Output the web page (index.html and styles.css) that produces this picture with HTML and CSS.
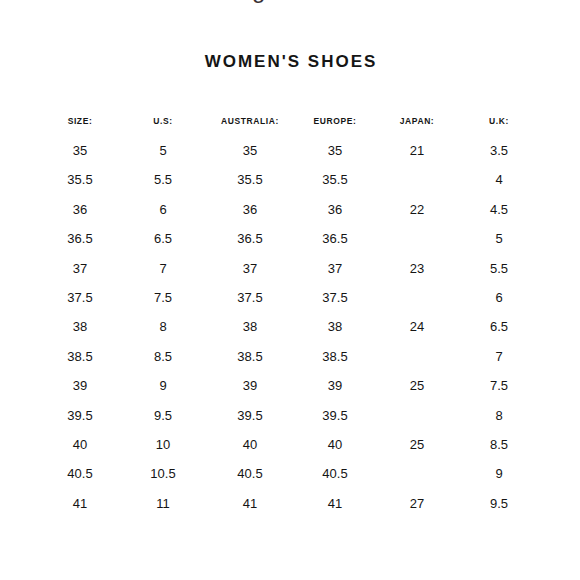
FILE: index.html
```html
<!DOCTYPE html>
<html>
<head>
<meta charset="utf-8">
<link rel="stylesheet" href="styles.css">
</head>
<body>
<div class="top-line">Sizing</div>
<h1 class="title">WOMEN'S SHOES</h1>
<div class="chart">
  <div class="hd">SIZE:</div><div class="hd">U.S:</div><div class="hd">AUSTRALIA:</div><div class="hd">EUROPE:</div><div class="hd">JAPAN:</div><div class="hd">U.K:</div>
  <div>35</div><div>5</div><div>35</div><div>35</div><div>21</div><div>3.5</div>
  <div>35.5</div><div>5.5</div><div>35.5</div><div>35.5</div><div></div><div>4</div>
  <div>36</div><div>6</div><div>36</div><div>36</div><div>22</div><div>4.5</div>
  <div>36.5</div><div>6.5</div><div>36.5</div><div>36.5</div><div></div><div>5</div>
  <div>37</div><div>7</div><div>37</div><div>37</div><div>23</div><div>5.5</div>
  <div>37.5</div><div>7.5</div><div>37.5</div><div>37.5</div><div></div><div>6</div>
  <div>38</div><div>8</div><div>38</div><div>38</div><div>24</div><div>6.5</div>
  <div>38.5</div><div>8.5</div><div>38.5</div><div>38.5</div><div></div><div>7</div>
  <div>39</div><div>9</div><div>39</div><div>39</div><div>25</div><div>7.5</div>
  <div>39.5</div><div>9.5</div><div>39.5</div><div>39.5</div><div></div><div>8</div>
  <div>40</div><div>10</div><div>40</div><div>40</div><div>25</div><div>8.5</div>
  <div>40.5</div><div>10.5</div><div>40.5</div><div>40.5</div><div></div><div>9</div>
  <div>41</div><div>11</div><div>41</div><div>41</div><div>27</div><div>9.5</div>
</div>
</body>
</html>
```
FILE: styles.css
```css
html, body {
  margin: 0;
  padding: 0;
  background: #fff;
  overflow: hidden;
}
body {
  font-family: "Liberation Sans", Arial, sans-serif;
  color: #151515;
}
.top-line {
  font-size: 24px;
  line-height: 24px;
  height: 24px;
  margin-top: -22px;
  padding-left: 200px;
  color: #3a3236;
}
.title {
  margin: 49.5px 0 0;
  font-size: 17px;
  line-height: 20px;
  font-weight: bold;
  letter-spacing: 2px;
  text-align: center;
  padding-left: 2px;
}
.chart {
  width: 500px;
  margin: 35px 0 0 38px;
  display: grid;
  grid-template-columns: 84px 82px 92px 78px 86px 78px;
  grid-auto-rows: 29.4px;
  align-items: center;
  text-align: center;
  font-size: 13px;
}
.chart .hd {
  font-size: 8.5px;
  font-weight: bold;
  letter-spacing: 0.6px;
}
```
